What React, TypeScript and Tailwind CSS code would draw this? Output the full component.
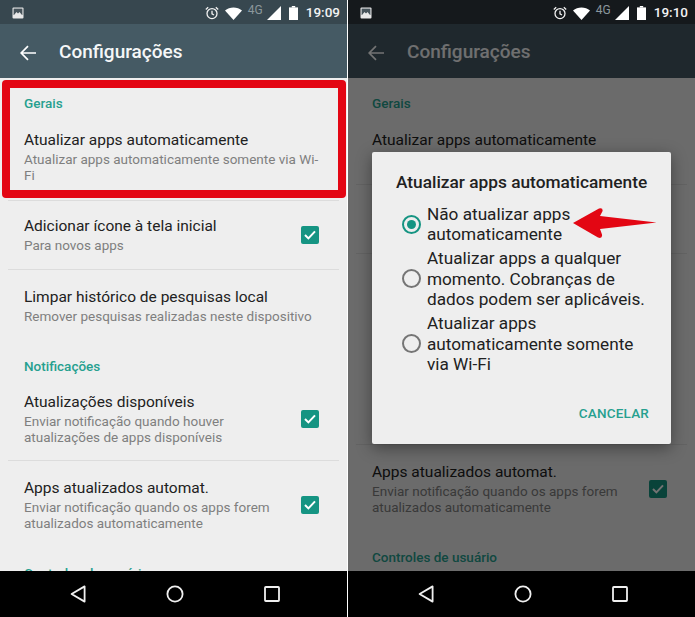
const TEAL = "text-[#26a08f]";

function StatusBar({ time, dim }: { time: string; dim?: boolean }) {
  return (
    <div className={`flex h-6 shrink-0 items-center pl-3 pr-[7px] pt-[2px] ${dim ? "bg-[#15191c]" : "bg-[#37474f]"}`}>
      <svg width="12" height="12" viewBox="0 0 12 12">
        <rect x="0.5" y="0.5" width="11" height="11" rx="1" fill="#e8e8e8" />
        <rect x="1.6" y="1.6" width="8.8" height="6.4" fill="#46535a" />
        <path d="M2 8 L4.5 5 L6 6.5 L7.5 5 L10 8 Z" fill="#e8e8e8" />
      </svg>
      <div className="ml-auto flex items-center">
        <svg width="14" height="14" viewBox="0 0 14 14" fill="none" stroke="#f2f2f2" strokeWidth="1.3">
          <circle cx="7" cy="7.6" r="5" />
          <path d="M7 4.8 V7.8 L9 9 M0.8 3.4 L3.2 1.2 M13.2 3.4 L10.8 1.2" />
        </svg>
        <svg className="ml-[6px]" width="17" height="13" viewBox="0 0 17 13">
          <path d="M0 3.4 C4.6 -0.6 12.4 -0.6 17 3.4 L8.5 13 Z" fill="#ffffff" />
        </svg>
        <span className="ml-[6px] -mt-[6px] font-['Roboto',sans-serif] text-[12px] leading-none text-[#8b979c]">4G</span>
        <svg className="ml-[4px]" width="14" height="14" viewBox="0 0 14 14">
          <path d="M0 14 L14 0 V14 Z" fill="#ffffff" />
        </svg>
        <svg className="ml-[8px]" width="9" height="14" viewBox="0 0 9 14">
          <rect x="2.8" y="0" width="3.4" height="1.5" fill="#ffffff" />
          <rect x="0" y="1.4" width="9" height="12.6" fill="#ffffff" />
        </svg>
        <span className="ml-[8px] font-['Roboto',sans-serif] text-[13.5px] font-medium leading-none text-[#f2f2f2]">{time}</span>
      </div>
    </div>
  );
}

function Toolbar() {
  return (
    <div className="flex h-[54px] items-center bg-[#455a64] pl-5 pt-[3px]">
      <svg width="16" height="16" viewBox="0 0 16 16" fill="none" stroke="#ffffff" strokeWidth="1.7">
        <path d="M16 8 H1.5 M8 1.2 L1.2 8 L8 14.8" />
      </svg>
      <span className="ml-[23px] font-['Roboto',sans-serif] text-[19px] font-medium text-[#f5f7f8]">Configurações</span>
    </div>
  );
}

function SectionLabel({ children, className = "" }: { children: string; className?: string }) {
  return <div className={`text-[13.5px] font-medium leading-4 ${TEAL} ${className}`}>{children}</div>;
}

function Checkbox() {
  return (
    <div className="flex h-[18px] w-[18px] shrink-0 items-center justify-center rounded-[2px] bg-[#159482]">
      <svg width="12" height="10" viewBox="0 0 12 10" fill="none" stroke="#ffffff" strokeWidth="2">
        <path d="M1 5 L4.4 8.4 L11 1.4" />
      </svg>
    </div>
  );
}

function Row({ title, sub, checked, className = "" }: { title: string; sub: React.ReactNode; checked?: boolean; className?: string }) {
  return (
    <div className={`flex items-center pl-6 pr-[28px] ${className}`}>
      <div className="min-w-0 flex-1">
        <div className="text-[15.5px] leading-5 text-[#212121]">{title}</div>
        <div className="mt-[1px] text-[13.5px] leading-4 text-[#7f7f7f]">{sub}</div>
      </div>
      {checked && <Checkbox />}
    </div>
  );
}

function Divider({ className = "" }: { className?: string }) {
  return <div className={`mx-2 h-px bg-[#dcdcdc] ${className}`} />;
}

// the second shot has "nao atualizar" picked, so the first summary is one line shorter
function Settings({ dimmed }: { dimmed?: boolean }) {
  return (
    <div className="h-full overflow-hidden bg-[#eeeeee] font-['Roboto',sans-serif]">
      <SectionLabel className="ml-6 mt-[17px]">Gerais</SectionLabel>
      <Row
        className="mt-[19px]"
        title="Atualizar apps automaticamente"
        sub={dimmed ? "Não atualizar apps automaticamente" : <>Atualizar apps automaticamente somente via Wi-<br />Fi</>}
      />
      <Divider className="mt-[17px]" />
      <Row className="mt-[15px]" title="Adicionar ícone à tela inicial" sub="Para novos apps" checked />
      <Divider className="mt-[16px]" />
      <Row className="mt-[17px]" title="Limpar histórico de pesquisas local" sub="Remover pesquisas realizadas neste dispositivo" />
      <SectionLabel className="ml-6 mt-[34px]">Notificações</SectionLabel>
      <Row
        className="mt-[18px]"
        title="Atualizações disponíveis"
        sub={<>Enviar notificação quando houver<br />atualizações de apps disponíveis</>}
        checked
      />
      <Divider className="mt-[15px]" />
      <Row
        className="mt-[17px]"
        title="Apps atualizados automat."
        sub={<>Enviar notificação quando os apps forem<br />atualizados automaticamente</>}
        checked
      />
      <SectionLabel className="ml-6 mt-[34px]">Controles de usuário</SectionLabel>
    </div>
  );
}

function NavBar() {
  return (
    <div className="flex h-[46px] shrink-0 items-center bg-black pl-[70px]">
      <svg width="16" height="18" viewBox="0 0 16 18" fill="none" stroke="#f0f0f0" strokeWidth="1.8">
        <path d="M14.6 1.4 V16.6 L1.6 9 Z" strokeLinejoin="round" />
      </svg>
      <svg className="ml-[80px]" width="18" height="18" viewBox="0 0 18 18" fill="none" stroke="#f0f0f0" strokeWidth="1.8">
        <circle cx="9" cy="9" r="7.6" />
      </svg>
      <svg className="ml-[80px]" width="16" height="16" viewBox="0 0 16 16" fill="none" stroke="#f0f0f0" strokeWidth="1.8">
        <rect x="1" y="1" width="14" height="14" rx="0.8" />
      </svg>
    </div>
  );
}

function Radio({ on }: { on?: boolean }) {
  return (
    <div
      className={`flex h-[19px] w-[19px] shrink-0 items-center justify-center rounded-full border-2 ${
        on ? "border-[#159482]" : "border-[#757575]"
      }`}
    >
      {on && <div className="h-[9px] w-[9px] rounded-full bg-[#159482]" />}
    </div>
  );
}

function Option({ on, children }: { on?: boolean; children: React.ReactNode }) {
  return (
    <div className="flex items-center">
      <Radio on={on} />
      <div className="ml-[6px] text-[17.2px] leading-[20.5px] text-[#212121]">{children}</div>
    </div>
  );
}

function Dialog() {
  return (
    <div className="absolute left-[24px] top-[128px] h-[292px] w-[299px] rounded-[2px] bg-[#eeeeee] pl-[30px] font-['Roboto',sans-serif] shadow-[0_4px_16px_rgba(0,0,0,0.4)]">
      <div className="-ml-[6px] whitespace-nowrap pt-[20px] text-[17.3px] font-medium leading-5 text-[#212121]">Atualizar apps automaticamente</div>
      <div className="mt-[11.5px] flex flex-col gap-[3.5px]">
        <Option on>Não atualizar apps<br />automaticamente</Option>
        <Option>Atualizar apps a qualquer<br />momento. Cobranças de<br />dados podem ser aplicáveis.</Option>
        <Option>Atualizar apps<br />automaticamente somente<br />via Wi-Fi</Option>
      </div>
      <div className="absolute bottom-[23px] right-[22px] text-[13.5px] font-medium leading-4 tracking-[0.2px] text-[#26a08f]">CANCELAR</div>
    </div>
  );
}

function Screen({ time, dimmed }: { time: string; dimmed?: boolean }) {
  return (
    <div className="flex h-full w-[347px] shrink-0 flex-col">
      <StatusBar time={time} dim={dimmed} />
      <div className="relative min-h-0 flex-1">
        <div className="flex h-full flex-col">
          <Toolbar />
          <div className="min-h-0 flex-1">
            <Settings dimmed={dimmed} />
          </div>
        </div>
        {dimmed && <div className="absolute inset-0 bg-black/55" />}
        {dimmed && <Dialog />}
        {!dimmed && (
          <div className="absolute left-[2px] top-[56px] h-[118px] w-[344px] rounded-[4px] border-[8px] border-[#e30613]" />
        )}
        {dimmed && (
          <svg className="absolute left-[225px] top-[184px]" width="84" height="31" viewBox="0 0 84 31">
            <path d="M0 15 L26 0.6 Q30 -0.4 29.6 3 L27 8 L83.5 14.6 L27 21 L29 26.5 Q29.6 31 25 29.6 Z" fill="#e30613" />
          </svg>
        )}
      </div>
      <NavBar />
    </div>
  );
}

export default function App() {
  return (
    <div className="flex h-[617px] w-[695px] overflow-hidden bg-white">
      <Screen time="19:09" />
      <div className="w-px shrink-0 bg-white" />
      <Screen time="19:10" dimmed />
    </div>
  );
}
